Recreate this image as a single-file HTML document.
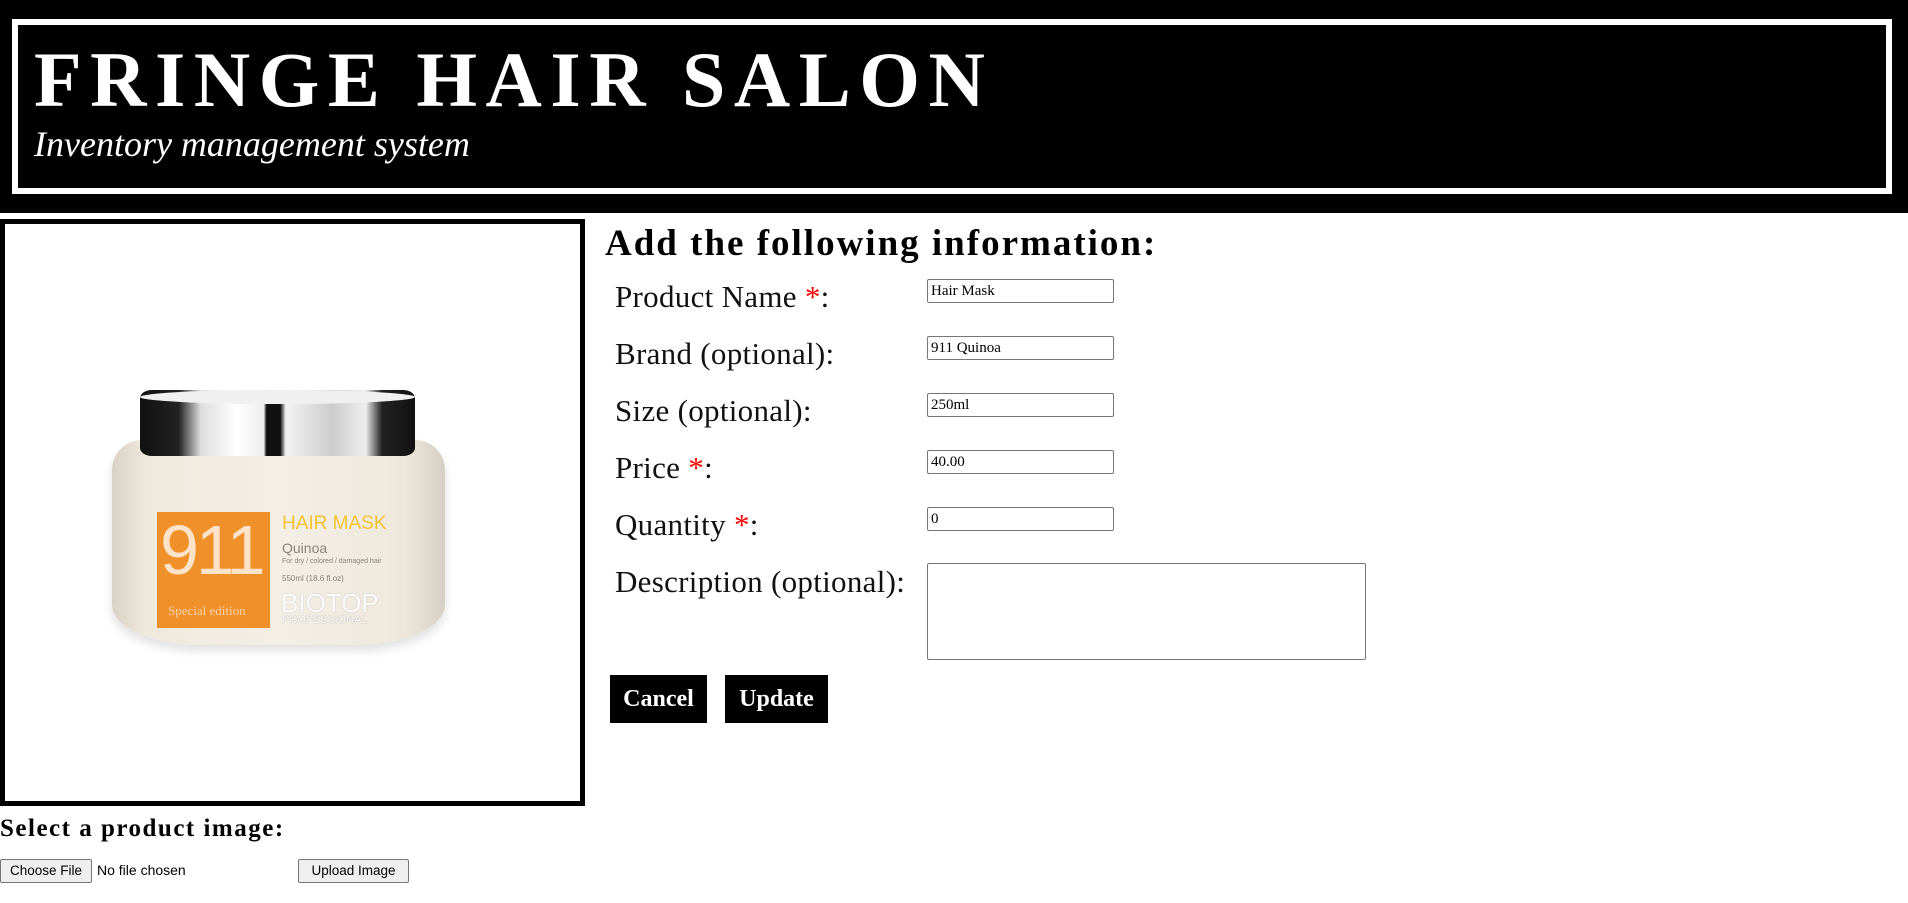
<!DOCTYPE html>
<html><head><meta charset="utf-8"><style>
*{box-sizing:border-box}
body{margin:0;width:1908px;height:903px;overflow:hidden;background:#fff;font-family:"Liberation Serif",serif;position:relative}
.hdr{position:absolute;left:0;top:0;width:1908px;height:213px;background:#000}
.hb{position:absolute;left:12px;top:19px;width:1880px;height:175px;border:6px solid #fff}
.t1{position:absolute;left:34px;top:35px;color:#fff;font-weight:bold;font-size:78px;letter-spacing:8.5px;white-space:nowrap}
.t2{position:absolute;left:34px;top:123px;color:#fff;font-style:italic;font-size:36px;white-space:nowrap}
.imgbox{position:absolute;left:0;top:219px;width:585px;height:587px;border:5px solid #000}
.a{position:absolute;white-space:nowrap}
.lbl{font-size:31px;color:#111;letter-spacing:0.3px}
.r{color:red}
input.in{position:absolute;left:927px;width:187px;height:24px;border:1px solid #767676;border-radius:2px;font-family:"Liberation Serif",serif;font-size:15px;padding:0 3px}
.btn{position:absolute;top:675px;height:48px;background:#000;color:#fff;font-weight:bold;font-size:24px;text-align:center;line-height:48px}
.sb{position:absolute;height:24px;border:1px solid #767676;background:#efefef;border-radius:2px;font-family:"Liberation Sans",sans-serif;font-size:13.5px;line-height:22px;text-align:center}
</style></head><body>
<div class="hdr"><div class="hb"></div>
<div class="t1">FRINGE HAIR SALON</div>
<div class="t2">Inventory management system</div></div>

<div class="imgbox"></div>
<div class="a" style="left:112px;top:440px;width:333px;height:205px;border-radius:30px 30px 90px 90px/30px 30px 40px 40px;background:linear-gradient(90deg,#d8d2c6 0%,#efe9dd 10%,#f4efe6 50%,#eee8dc 88%,#d6d0c4 100%);box-shadow:0 6px 10px rgba(0,0,0,.12)"></div>
<div class="a" style="left:140px;top:390px;width:275px;height:66px;border-radius:12px/8px;background:linear-gradient(90deg,#111 0%,#222 14%,#ddd 22%,#fff 35%,#eee 45%,#111 46%,#111 51%,#f3f3f3 53%,#ccc 70%,#eee 82%,#222 88%,#111 100%)"></div>
<div class="a" style="left:140px;top:390px;width:275px;height:14px;border-radius:50%;background:#f0f0f0"></div>
<div class="a" style="left:157px;top:512px;width:113px;height:116px;background:#f0902a"></div>
<div class="a" style="left:160px;top:510px;color:#fde3c8;font-family:'Liberation Sans',sans-serif;font-size:70px;font-weight:100;letter-spacing:-3px">911</div>
<div class="a" style="left:168px;top:603px;color:#fcd3a8;font-size:13px">Special edition</div>
<div class="a" style="left:282px;top:513px;color:#f3c234;font-family:'Liberation Sans',sans-serif;font-size:19px">HAIR MASK</div>
<div class="a" style="left:282px;top:540px;color:#8a8478;font-family:'Liberation Sans',sans-serif;font-size:14px">Quinoa</div>
<div class="a" style="left:282px;top:558px;color:#8a8478;font-family:'Liberation Sans',sans-serif;font-size:7px">For dry / colored / damaged hair</div>
<div class="a" style="left:282px;top:574px;color:#8a8478;font-family:'Liberation Sans',sans-serif;font-size:8px">550ml (18.6 fl.oz)</div>
<div class="a" style="left:281px;top:588px;color:#fff;font-family:'Liberation Sans',sans-serif;font-size:26px;text-shadow:0 0 1px #999">BIOTOP</div>
<div class="a" style="left:282px;top:614px;color:#fff;font-family:'Liberation Sans',sans-serif;font-size:11px;text-shadow:0 0 1px #888">PROFESSIONAL</div>

<div class="a" style="left:605px;top:222px;font-weight:bold;font-size:37px;letter-spacing:2px">Add the following information:</div>
<div class="a lbl" style="left:615px;top:279px">Product Name <span class="r">*</span>:</div>
<div class="a lbl" style="left:615px;top:336px">Brand (optional):</div>
<div class="a lbl" style="left:615px;top:393px">Size (optional):</div>
<div class="a lbl" style="left:615px;top:450px">Price <span class="r">*</span>:</div>
<div class="a lbl" style="left:615px;top:507px">Quantity <span class="r">*</span>:</div>
<div class="a lbl" style="left:615px;top:564px">Description (optional):</div>
<input class="in" style="top:279px" value="Hair Mask">
<input class="in" style="top:336px" value="911 Quinoa">
<input class="in" style="top:393px" value="250ml">
<input class="in" style="top:450px" value="40.00">
<input class="in" style="top:507px" value="0">
<div class="a" style="left:927px;top:563px;width:439px;height:97px;border:1px solid #767676;border-radius:2px"></div>
<div class="btn" style="left:610px;width:97px">Cancel</div>
<div class="btn" style="left:725px;width:103px">Update</div>

<div class="a" style="left:0;top:815px;font-weight:bold;font-size:25px;letter-spacing:1.5px">Select a product image:</div>
<div class="sb" style="left:0;top:859px;width:92px">Choose File</div>
<div class="a" style="left:97px;top:862px;font-family:'Liberation Sans',sans-serif;font-size:14px">No file chosen</div>
<div class="sb" style="left:298px;top:859px;width:111px">Upload Image</div>
</body></html>
